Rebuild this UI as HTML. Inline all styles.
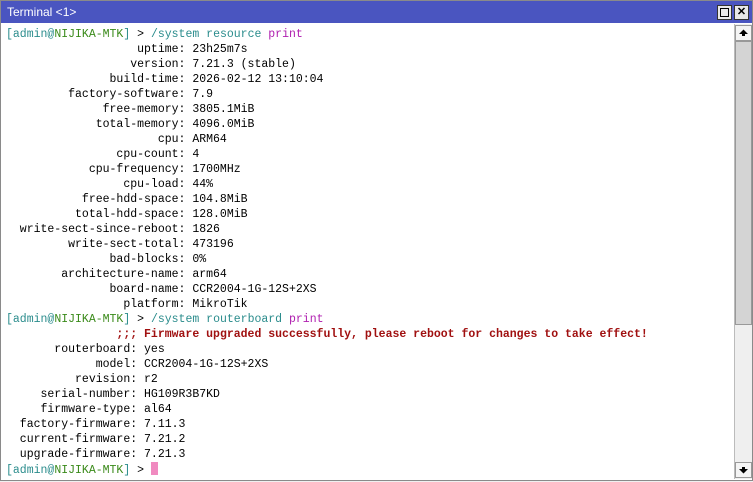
<!DOCTYPE html>
<html><head><meta charset="utf-8"><style>
html,body{margin:0;padding:0;width:753px;height:481px;overflow:hidden;background:#f0f0f0;}
.win{position:absolute;left:0;top:0;width:751px;height:479px;border:1px solid #8a8a8a;background:#fff;}
.title{position:absolute;left:0;top:0;width:751px;height:22px;background:#4a55c0;color:#fff;font:12px "Liberation Sans",sans-serif;line-height:22px;}
.title span{position:absolute;left:6px;top:0;}
.btn{position:absolute;top:4px;width:13px;height:13px;background:#e8e8e8;border:1px solid #333;}
pre{position:absolute;left:5px;top:26px;margin:0;font:11.5px "Liberation Mono",monospace;line-height:15px;color:#000;}
.t{color:#2a8c8c}.g{color:#3a8a1a}.m{color:#b020b0}.r{color:#a01010;font-weight:bold}
.cur{display:inline-block;width:7px;height:13px;background:#f08ac0;vertical-align:-2px;}
.sb{position:absolute;left:733px;top:23px;width:17px;height:455px;background:#efefef;border-left:1px solid #bbb;}
.arr{position:absolute;left:0;width:15px;height:14px;background:#f4f4f4;border:1px solid #999;}
.thumb{position:absolute;left:0;top:17px;width:15px;height:282px;background:#d4d4d4;border:1px solid #999;}
</style></head><body>
<div class="win">
<div class="title"><span>Terminal &lt;1&gt;</span>
<div class="btn" style="left:716px"><div style="position:absolute;left:2px;top:2px;width:7px;height:7px;border:1px solid #000"></div></div>
<div class="btn" style="left:733px;font:bold 11px 'Liberation Sans',sans-serif;color:#000;text-align:center;line-height:13px">✕</div>
</div>
<pre><span class="t">[admin@<span class="g">NIJIKA-MTK</span>]</span> &gt; <span class="t">/system resource</span> <span class="m">print</span>
                   uptime: 23h25m7s
                  version: 7.21.3 (stable)
               build-time: 2026-02-12 13:10:04
         factory-software: 7.9
              free-memory: 3805.1MiB
             total-memory: 4096.0MiB
                      cpu: ARM64
                cpu-count: 4
            cpu-frequency: 1700MHz
                 cpu-load: 44%
           free-hdd-space: 104.8MiB
          total-hdd-space: 128.0MiB
  write-sect-since-reboot: 1826
         write-sect-total: 473196
               bad-blocks: 0%
        architecture-name: arm64
               board-name: CCR2004-1G-12S+2XS
                 platform: MikroTik
<span class="t">[admin@<span class="g">NIJIKA-MTK</span>]</span> &gt; <span class="t">/system routerboard</span> <span class="m">print</span>
                <span class="r">;;; Firmware upgraded successfully, please reboot for changes to take effect!</span>
       routerboard: yes
             model: CCR2004-1G-12S+2XS
          revision: r2
     serial-number: HG109R3B7KD
     firmware-type: al64
  factory-firmware: 7.11.3
  current-firmware: 7.21.2
  upgrade-firmware: 7.21.3
<span class="t">[admin@<span class="g">NIJIKA-MTK</span>]</span> &gt; <span class="cur"></span></pre>
<div class="sb">
<div class="arr" style="top:1px"><svg width="15" height="14"><path d="M3 8 L7.5 3.5 L12 8 L9 8 L9 10 L6 10 L6 8Z" fill="#000"/></svg></div>
<div class="thumb"></div>
<div class="arr" style="top:438px"><svg width="15" height="14"><path d="M3 6 L7.5 10.5 L12 6 L9 6 L9 4 L6 4 L6 6Z" fill="#000"/></svg></div>
</div>
</div>
</body></html>
